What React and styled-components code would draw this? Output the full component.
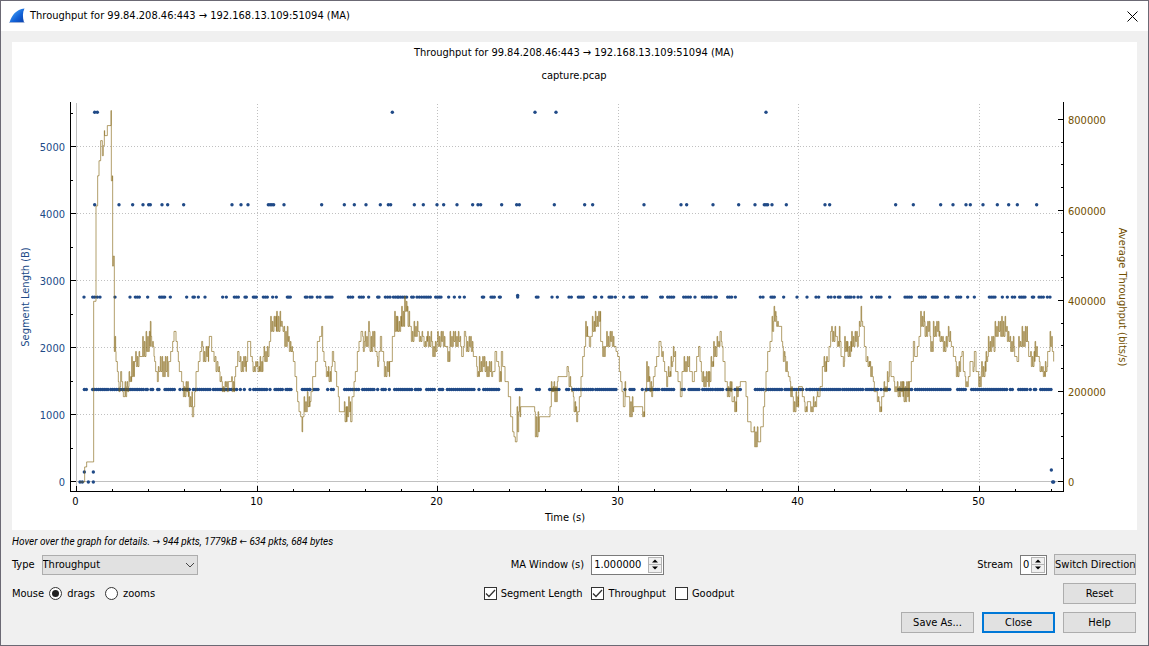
import React, { useState } from 'react'
import styled, { createGlobalStyle } from 'styled-components'

const GlobalStyle = createGlobalStyle`
    * {
        box-sizing: border-box;
    }
    body {
        margin: 0;
        background: #f0f0f0;
    }
    body, button, input, select {
        font-family: "DejaVu Sans Condensed", "DejaVu Sans", sans-serif;
        font-size: 11px;
        line-height: 14px;
        color: #000;
    }
`;

const Dialog = styled.main`
    border: 1px solid #6b6974;
    background: #f0f0f0;
`;

const TitleBar = styled.header`
    display: flex;
    align-items: center;
    gap: 5px;
    height: 30px;
    padding: 0 8px;
    background: #fff;
`;

const WindowTitle = styled.h1`
    flex: 1;
    margin: 0;
    font-size: 11px;
    font-weight: normal;
`;

const CloseIconButton = styled.button`
    display: flex;
    padding: 2px;
    border: 0;
    background: none;
`;

const Content = styled.div`
    padding: 11px 11px 12px;
`;

const Chart = styled.svg`
    display: block;
    width: 100%;
    height: auto;
    background: #fff;
    font-size: 11px;
`;

const Hint = styled.p`
    margin: 5px 0 5px;
    font-family: Roboto, "DejaVu Sans Condensed", sans-serif;
    font-style: italic;
    font-size: 10px;
`;

const Rows = styled.div`
    display: flex;
    flex-direction: column;
    gap: 8px;
    padding-right: 1px;
`;

const Row = styled.div`
    display: flex;
    align-items: center;
    justify-content: ${props => props.$end ? 'flex-end' : 'space-between'};
    gap: 8px;
    min-height: 21px;
`;

const Group = styled.div`
    display: flex;
    align-items: center;
    gap: ${props => props.$gap || 7}px;
`;

const SelectWrap = styled.div`
    position: relative;
    width: 156px;

    svg {
        position: absolute;
        right: 3px;
        top: 7px;
        pointer-events: none;
    }
`;

const Select = styled.select`
    display: block;
    width: 100%;
    height: 20px;
    padding: 0;
    border: 1px solid #adadad;
    border-radius: 0;
    background: #e1e1e1;
    appearance: none;
`;

const SpinBox = styled.div`
    display: flex;
    width: ${props => props.$width}px;
    height: 20px;
    padding: 1px;
    border: 1px solid #7a7a7a;
    background: #fff;
`;

const SpinInput = styled.input`
    flex: 1;
    min-width: 0;
    padding: 0 0 0 1px;
    border: 0;
    outline: 0;
    background: none;
`;

const SpinButtons = styled.div`
    display: flex;
    flex-direction: column;
    width: 14px;
`;

const SpinButton = styled.button`
    display: flex;
    flex: 1;
    align-items: center;
    justify-content: center;
    padding: 0;
    border: 1px solid #b4b4b4;
    background: #f0f0f0;

    & + & {
        border-top: 0;
    }
`;

const Option = styled.label`
    display: flex;
    align-items: center;
    gap: ${props => props.$gap || 4}px;
`;

const Radio = styled.input`
    display: grid;
    place-items: center;
    width: 13px;
    height: 13px;
    margin: 0;
    border: 1px solid #333;
    border-radius: 50%;
    background: #fff;
    appearance: none;

    &:checked::before {
        content: '';
        width: 7px;
        height: 7px;
        border-radius: 50%;
        background: #222;
    }
`;

const CheckWrap = styled.span`
    position: relative;
    display: flex;

    svg {
        position: absolute;
        inset: 0;
        pointer-events: none;
    }
`;

const CheckInput = styled.input`
    width: 13px;
    height: 13px;
    margin: 0;
    border: 1px solid #333;
    background: #fff;
    appearance: none;
`;

const Button = styled.button`
    width: ${props => props.$wide ? 82 : 73}px;
    height: 21px;
    padding: 0;
    border: ${props => props.$primary ? '2px solid #0078d7' : '1px solid #adadad'};
    background: #e1e1e1;
    white-space: nowrap;
`;

const BLUE = '#204a87'
const BROWN = '#725000'

// plot scale: three slots to a pixel, one segment per second is 5px high
const slotX = slot => 60 + slot / 3
const levelY = level => 482 - level * 5.02
const lengthY = bytes => 482 - bytes * 0.0666

// "slot:level" holds a value, "slot:low-high" swings between the two
const throughput = [
    [0, '68:0 74:3 80:4 101:36 108:55 113:61 117:64 122:68 127:65 130:67 133:70 134:69 142:71 153:74 154:60 157:61 158:43 160:45 163:26 165:29 167:26 168:24 172:22 175:18-20 182:22 185:20 188:17-18 195:17-20 201:18-20 207:20-22 215:21-25 223:24 227:23-26 239:25 248:25-29 258:26-30 271:32 273:27-29 282:25 284:24 287:22 292:20 295:22-23 301:22-25 306:21-25 328:24 332:26 338:28 342:30 348:28 352:26 355:24 358:22 365:20 368:17-20 386:15-18 397:13 401:15 404:18 408:22 415:24 420:26 425:28 428:24-27 446:27 448:29 455:26 460:24-26 466:22-25 472:22-24 478:20-22 485:18-20 505:20 515:18-21 524:21 527:23 533:26 537:24 541:22-25 559:24 563:28 572:25 577:22-24 600:22-25 609:25 612:24-27 628:28 632:30-33 650:30-34 664:32 667:30-31 672:27-31 686:26-29 696:27 697:26 700:24 705:21 710:18 713:16 717:14 722:13 726:10 728:13 732:14-17 742:15-18'],
    [750, '0:16 3:18 8:21 17:24 22:28 29:29 35:31 38:26 42:24 47:21-23 55:20-23 64:23 67:26 71:24 75:22 80:19 85:17 88:14 103:12-16 111:13-15 116:14-17 122:12 126:17 132:20 136:22 142:26 147:28 153:30 158:26-29 165:27-30 176:32 178:26-30 195:26 201:23-25 207:26 211:29 215:26 221:21-24 239:24 247:29 254:30-34 262:30-33 275:31-35 284:34-37 292:31-35 302:28-31 312:29-32 326:28-30 340:27-29 353:27-30 366:25-28 383:27-30 405:27 411:24-27 420:27-30 450:27-29 455:25 460:27 463:30 467:26-29 490:25 500:21-23 508:22-25 528:21-24 548:22 555:26 560:24 566:20-23 574:26 578:23 585:20 595:17 602:13 608:10 612:9 616:8 621:10-15 628:13-17 632:15 674:9-14 688:13 720:15 724:18-20 732:16-20 744:21'],
    [1500, '21:23 25:19-22 35:18 40:14-17 48:12-15 53:14 58:17 63:21 68:25 73:27 77:29-32 83:29 88:27 92:29 97:30-33 106:31-34 122:28 126:25-28 136:27 140:27-30 165:27 168:26 173:25 178:22 182:20 186:18 190:15 195:17-20 200:17 207:13-17 221:15 246:13-15 254:18 260:20-24 268:18-21 273:17-20 280:21 285:23 290:25 297:28 303:25-27 310:24 314:22 318:19-22 325:21-23 333:23-25 340:25-27 347:22 354:20 361:17 366:22 372:22-25 392:22 397:20 403:22 410:25 416:27 420:24 424:20-22 429:19-22 448:20-22 453:23-25 461:25-28 471:27-29 480:30 484:27-28 489:24 495:20 500:17-20 516:16 522:14-17 530:17-19 536:19 541:20 558:17 563:12 573:10 582:7-11 597:8 602:11 610:15 614:18 618:22 623:26 630:28 636:30-33 642:32-35 648:31-33 656:31 665:28 668:24-27 675:22-25 683:21-22 690:17-20 698:14-17 708:15-18 716:19 727:17 733:14-16 742:16'],
    [2250, '0:14-16 10:15-17 22:17-18 30:19 37:23 42:22-25 50:24-25 57:27 62:30 65:28-31 80:27-29 88:28-31 93:25 98:23-25 104:26-29 112:25-28 125:27-30 145:29 148:31-32 153:32-35 158:31 163:27 168:24 172:23-25 180:21-24 190:20 193:18 200:16-18 207:14-16 215:17 222:18-20 232:20-22 238:24 243:21 252:18-20 262:17-20 280:16-20 298:20 304:24 310:28 314:25 322:27 327:29 332:31-34 343:29-32 360:26-29 370:29-32 388:28-30 398:26-29 415:28-31 424:27 430:25 437:21-24 452:25 456:26 460:22 465:19-21 475:21 480:24 487:22-24 493:26 498:22 504:19-22 515:21-24 528:24-26 535:26-29 555:29-32 575:29-33 590:28-31 600:26-29 614:25 621:24 626:27-29 636:27-31 652:28 656:25 662:23-26 675:25-28 682:25 688:22-24 698:21-23 706:22-24 713:26 720:27-30 727:26 731:24'],
]

// "slot" is one packet, "slot-slot" a burst
const packets = [
    [5552, 0, '104-112 997 1425 1488 2118'],
    [4164, 0, '104 177 218 249 266-271 306 323 371 516 543 564 625-641 672 785 853 883 918 961 985-992 1063 1090 1131 1151 1191 1238 1254-1262 1325 1370-1378 1483'],
    [4164, 1470, '104 128 282 393 410 489 566 615 643-653 666 709 825 839 1037 1090 1172 1209 1248 1261 1299 1342 1376 1402 1460'],
    [2776, 0, '72 98-104 112 120 165 210 226-238 263 299-314 331 380 399-403 415 435 488 499 523-535 555-559 580-589 610-622 638 649 682-691 736-741'],
    [2776, 750, '0-6 22-30 48-66 115-128 148-160 176 203-207 226-240 250-262 266-290 305-310 321-335 342-361 377-393 416 433 449 463 517-521 543-553 568-571 623 679-684 726 742'],
    [2800, 750, '623'],
    [2776, 1500, '27-34 55-70 103-107 125 147-156 166 191 210-220 247-260 302-307 323-329 335-341 371-391 405 427-453 465-469 503-515 526 601-609 633-643 671 711 741'],
    [2776, 2250, '18-26 55-63 74 85-90 107-123 132 144 153 185 200-213 239 285-304 328-346 367-382 406-414 440-452 473 493 538-555 577 592 607-614 629-645 667-671 687-700 712-720'],
    [1388, 0, '73-79 98-144 152-228 233-250 258-262 273-278 293-297 315-343 360 370-388 400-450 460-500 508-514 523-530 541 553 570 581-620 630 645-667 678-693 727-749'],
    [1388, 750, '0 12-24 53 64-70 104-146 158-192 203 216-226 238 254-305 316-331 350-373 388-398 412-492 507 521-566 619-634 680-688 719-747'],
    [1388, 1500, '20-26 38-98 107-168 195 210-222 247 258-297 307-341 366-373 387-417 428-458 466-488 501-513 525-541 586-610 620-665 675-728 740-748'],
    [1388, 2250, '2-90 98-158 168-203 213 222-238 266-305 316-420 443-466 485-590 601-607 626-651 661 673-677 692-723'],
    [150, 0, '73 100'],
    [0, 0, '60 67 85 100'],
    [180, 2250, '724'],
    [0, 2250, '728-731'],
]

function throughputPath() {
    const points = []
    throughput.forEach(([start, list]) => {
        list.split(' ').forEach(entry => {
            const [slot, range] = entry.split(':')
            const [low, high] = range.split('-').map(Number)
            points.push({ slot: start + Number(slot), low, high })
        })
    })

    let d = 'M' + slotX(60) + ' ' + levelY(0)
    points.forEach((p, i) => {
        if (p.high === undefined) {
            d += 'H' + slotX(p.slot).toFixed(2) + 'V' + levelY(p.low).toFixed(2)
            return
        }
        const end = points[i + 1] ? points[i + 1].slot : p.slot + 3
        const swing = [p.high, p.low, p.high - 1, p.low, p.high, p.low + 1]
        for (let s = p.slot, n = 0; s < end; s += n % 2 ? 3 : 2, n++) {
            d += 'H' + slotX(s).toFixed(2) + 'V' + levelY(swing[n % 6]).toFixed(2)
        }
    })
    return d
}

function packetDots() {
    const dots = []
    packets.forEach(([bytes, start, list]) => {
        list.split(' ').forEach(entry => {
            const [from, to = from] = entry.split('-').map(Number)
            const count = Math.max(1, Math.round((to - from) / 6))
            for (let n = 0; n <= (to > from ? count : 0); n++) {
                dots.push([slotX(start + from + (to - from) * n / count), lengthY(bytes)])
            }
        })
    })
    return dots
}

const range = count => Array.from({ length: count }, (_, i) => i)

const line = throughputPath()
const dots = packetDots()
const secondX = s => Math.round(76 + s * 18.05) + 0.5
const bytesY = b => Math.round(481 - b * 0.067) + 0.5
const bitsY = b => Math.round(481 - b * 0.0004525) + 0.5

function ThroughputChart() {
    return (
        <Chart viewBox="12 42 1125 488" role="img" aria-label="Throughput graph">
            <g textAnchor="middle">
                <text x="574" y="56">Throughput for 99.84.208.46:443 → 192.168.13.109:51094 (MA)</text>
                <text x="574" y="79">capture.pcap</text>
            </g>

            <g stroke="#c0c0c0" strokeDasharray="1 2">
                {range(5).map(i => <path key={i} d={`M${secondX(i * 10 + 10)} 104V491`} />)}
                {range(5).map(i => <path key={i} d={`M77 ${bytesY(i * 1000 + 1000)}H1063`} />)}
            </g>
            <path d="M76.5 103V491M71 481.5H1063" stroke="#c0c0c0" />

            <g fill={BLUE}>
                {dots.map(([x, y], i) => <circle key={i} cx={x} cy={y} r="1.7" />)}
            </g>
            <path d={line} fill="none" stroke="#80600c" strokeOpacity="0.6" strokeWidth="1" />

            <g stroke="#000">
                <path d="M70.5 102V492M70 491.5H1064M1063.5 102V492" fill="none" />
                {range(28).map(i => i * 2).map(s => (
                    <path key={s} d={`M${secondX(s)} 491v${s % 10 ? -2 : -5}`} />
                ))}
                {range(12).map(i => (
                    <path key={i} d={`M71 ${bytesY(i * 500)}h${i % 2 ? 2 : 5}`} />
                ))}
                {range(17).map(i => (
                    <path key={i} d={`M1063 ${bitsY(i * 50000)}h${i % 4 ? -2 : -5}`} />
                ))}
            </g>

            <g textAnchor="middle">
                {range(6).map(i => <text key={i} x={secondX(i * 10) - 1} y="505">{i * 10}</text>)}
                <text x="565" y="521">Time (s)</text>
            </g>
            <g textAnchor="end" fill={BLUE}>
                {range(6).map(i => <text key={i} x="65" y={bytesY(i * 1000) + 4}>{i * 1000}</text>)}
            </g>
            <g fill={BROWN}>
                {range(5).map(i => <text key={i} x="1068" y={bitsY(i * 200000) + 4}>{i * 200000}</text>)}
            </g>
            <text transform="translate(29 297) rotate(-90)" textAnchor="middle" fill={BLUE}>Segment Length (B)</text>
            <text transform="translate(1119 297) rotate(90)" textAnchor="middle" fill={BROWN}>Average Throughput (bits/s)</text>
        </Chart>
    )
}

function FinLogo() {
    return (
        <svg width="16" height="16" viewBox="0 0 16 16" aria-hidden="true">
            <defs>
                <linearGradient id="fin" x1="0" y1="0" x2="1" y2="1">
                    <stop offset="0.2" stopColor="#3d9bf5" />
                    <stop offset="0.6" stopColor="#1160d6" />
                    <stop offset="1" stopColor="#0a3fa8" />
                </linearGradient>
            </defs>
            <path d="M0.5 14.5C3 7 7 1.5 15.5 0.5C13.5 4 13.5 9 15 14.5Z" fill="url(#fin)" />
            <path d="M0.3 14.5H15.5" stroke="#9fb2d8" />
        </svg>
    )
}

function Spin({ id, width, initial, step }) {
    const [value, setValue] = useState(initial)
    const digits = (initial.split('.')[1] || '').length
    const change = by => setValue(Math.max(0, Number(value) + by).toFixed(digits))

    return (
        <SpinBox $width={width}>
            <SpinInput id={id} value={value} onChange={e => setValue(e.target.value)} />
            <SpinButtons>
                <SpinButton aria-label="Increase" onClick={() => change(step)}>
                    <svg width="6" height="4"><path d="M0 3.5L3 0.5L6 3.5Z" /></svg>
                </SpinButton>
                <SpinButton aria-label="Decrease" onClick={() => change(-step)}>
                    <svg width="6" height="4"><path d="M0 0.5L3 3.5L6 0.5Z" /></svg>
                </SpinButton>
            </SpinButtons>
        </SpinBox>
    )
}

function Check({ label, initial }) {
    const [checked, setChecked] = useState(initial)

    return (
        <Option>
            <CheckWrap>
                <CheckInput type="checkbox" checked={checked} onChange={() => setChecked(!checked)} />
                {checked && (
                    <svg width="13" height="13">
                        <path d="M2 6.5L5 9.5L11 3" fill="none" stroke="#333" strokeWidth="1.3" />
                    </svg>
                )}
            </CheckWrap>
            {label}
        </Option>
    )
}

export default function App() {
    const [mouse, setMouse] = useState('drags')

    return (
        <>
            <GlobalStyle />
            <Dialog>
                <TitleBar>
                    <FinLogo />
                    <WindowTitle>Throughput for 99.84.208.46:443 → 192.168.13.109:51094 (MA)</WindowTitle>
                    <CloseIconButton aria-label="Close window">
                        <svg width="11" height="11"><path d="M0.5 0.5L10.5 10.5M10.5 0.5L0.5 10.5" stroke="#000" /></svg>
                    </CloseIconButton>
                </TitleBar>
                <Content>
                    <ThroughputChart />
                    <Hint>Hover over the graph for details. → 944 pkts, 1779kB ← 634 pkts, 684 bytes</Hint>
                    <Rows>
                        <Row>
                            <Group>
                                <label htmlFor="type">Type</label>
                                <SelectWrap>
                                    <Select id="type" defaultValue="Throughput">
                                        <option>Throughput</option>
                                        <option>Round Trip Time</option>
                                    </Select>
                                    <svg width="10" height="6"><path d="M1 1L5 5L9 1" fill="none" stroke="#444" /></svg>
                                </SelectWrap>
                            </Group>
                            <Group>
                                <label htmlFor="window">MA Window (s)</label>
                                <Spin id="window" width={73} initial="1.000000" step={1} />
                            </Group>
                            <Group>
                                <label htmlFor="stream">Stream</label>
                                <Spin id="stream" width={27} initial="0" step={1} />
                                <Button $wide>Switch Direction</Button>
                            </Group>
                        </Row>
                        <Row>
                            <Group $gap={5} role="radiogroup" aria-labelledby="mouse">
                                <span id="mouse">Mouse</span>
                                <Group $gap={10}>
                                    {['drags', 'zooms'].map(mode => (
                                        <Option key={mode} $gap={5}>
                                            <Radio type="radio" name="mouse" checked={mouse === mode} onChange={() => setMouse(mode)} />
                                            {mode}
                                        </Option>
                                    ))}
                                </Group>
                            </Group>
                            <Group $gap={9}>
                                <Check label="Segment Length" initial={true} />
                                <Check label="Throughput" initial={true} />
                                <Check label="Goodput" initial={false} />
                            </Group>
                            <Button>Reset</Button>
                        </Row>
                        <Row $end>
                            <Button>Save As...</Button>
                            <Button $primary>Close</Button>
                            <Button>Help</Button>
                        </Row>
                    </Rows>
                </Content>
            </Dialog>
        </>
    )
}
